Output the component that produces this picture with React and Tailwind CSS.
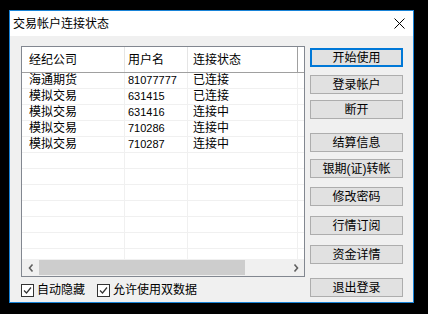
import React from 'react';

const CJK = { fontFamily: '"Liberation Sans", "Noto Sans CJK SC", sans-serif' };

const rows = [
  { company: '海通期货', user: '81077777', status: '已连接' },
  { company: '模拟交易', user: '631415', status: '已连接' },
  { company: '模拟交易', user: '631416', status: '连接中' },
  { company: '模拟交易', user: '710286', status: '连接中' },
  { company: '模拟交易', user: '710287', status: '连接中' },
];

const buttons = [
  { label: '开始使用', mt: 'mt-0', primary: true },
  { label: '登录帐户', mt: 'mt-[8px]' },
  { label: '断开', mt: 'mt-[6px]' },
  { label: '结算信息', mt: 'mt-[14px]' },
  { label: '银期(证)转帐', mt: 'mt-[7px]' },
  { label: '修改密码', mt: 'mt-[9px]' },
  { label: '行情订阅', mt: 'mt-[10px]' },
  { label: '资金详情', mt: 'mt-[10px]' },
  { label: '退出登录', mt: 'mt-[14px]' },
];

const Check = ({ label }) => (
  <label className="flex items-center gap-[3px]">
    <span className="w-[13px] h-[13px] border border-[#333333] bg-white flex items-center justify-center">
      <svg width="9" height="9" viewBox="0 0 9 9">
        <path d="M1 4.5 L3.5 7 L8 1.5" fill="none" stroke="#333" strokeWidth="1.2" />
      </svg>
    </span>
    <span className="text-[12px] leading-[14px] text-black">{label}</span>
  </label>
);

export default function App() {
  const empty = Array.from({ length: 8 });
  return (
    <div className="w-[428px] h-[314px] bg-black pt-[10px] pl-[9px]" style={CJK}>
      <div className="w-[405px] h-[293px] border border-[#1883d7] bg-[#f0f0f0] flex flex-col">
        {/* title bar */}
        <div className="h-[25px] bg-white flex items-center justify-between pl-[3px] pr-[8px]">
          <span className="text-[12px] leading-[14px] text-black">交易帐户连接状态</span>
          <svg width="11" height="11" viewBox="0 0 11 11">
            <path d="M0.5 0.5 L10.5 10.5 M10.5 0.5 L0.5 10.5" stroke="#000" strokeWidth="1" />
          </svg>
        </div>

        <div className="flex pl-[11px] pt-[10px]">
          <div className="flex flex-col">
            {/* list */}
            <div className="w-[284px] h-[231px] border border-[#828790] bg-white flex flex-col">
              <div className="h-[26px] flex border-b border-[#a0a0a0] text-[12px] text-black">
                <div className="w-[103px] pl-[7px] border-r border-[#e5e5e5] flex items-center">经纪公司</div>
                <div className="w-[63px] pl-[3px] border-r border-[#e5e5e5] flex items-center">用户名</div>
                <div className="w-[110px] pl-[5px] border-r border-[#a0a0a0] flex items-center">连接状态</div>
                <div className="flex-1"></div>
              </div>
              <div className="flex-1 overflow-hidden">
                {rows.map((r, i) => (
                  <div key={i} className="h-[16px] flex border-b border-[#f0f0f0] text-[12px] text-black">
                    <div className="w-[103px] pl-[7px] border-r border-[#f0f0f0] flex items-center leading-[15px]">{r.company}</div>
                    <div className="w-[63px] pl-[3px] border-r border-[#f0f0f0] flex items-center text-[11px] leading-[15px]">{r.user}</div>
                    <div className="w-[110px] pl-[5px] border-r border-[#f0f0f0] flex items-center leading-[15px]">{r.status}</div>
                    <div className="flex-1"></div>
                  </div>
                ))}
                {empty.map((_, i) => (
                  <div key={'e' + i} className="h-[16px] flex border-b border-[#f0f0f0]">
                    <div className="w-[103px] border-r border-[#f0f0f0]"></div>
                    <div className="w-[63px] border-r border-[#f0f0f0]"></div>
                    <div className="w-[110px] border-r border-[#f0f0f0]"></div>
                    <div className="flex-1"></div>
                  </div>
                ))}
              </div>
              {/* horizontal scrollbar */}
              <div className="h-[17px] bg-[#f0f0f0] flex items-center">
                <div className="w-[17px] h-[17px] flex items-center justify-center">
                  <svg width="6" height="8" viewBox="0 0 6 8">
                    <path d="M4.5 0.5 L1.5 4 L4.5 7.5" fill="none" stroke="#606060" strokeWidth="1.6" />
                  </svg>
                </div>
                <div className="w-[206px] h-[15px] bg-[#cdcdcd]"></div>
                <div className="flex-1"></div>
                <div className="w-[17px] h-[17px] flex items-center justify-center">
                  <svg width="6" height="8" viewBox="0 0 6 8">
                    <path d="M1.5 0.5 L4.5 4 L1.5 7.5" fill="none" stroke="#606060" strokeWidth="1.6" />
                  </svg>
                </div>
              </div>
            </div>
            {/* checkboxes */}
            <div className="flex items-center mt-[6px] gap-[12px]">
              <Check label="自动隐藏" />
              <Check label="允许使用双数据" />
            </div>
          </div>

          {/* buttons */}
          <div className="flex flex-col ml-[5px] pt-[2px]">
            {buttons.map((b) => (
              <button
                key={b.label}
                className={`${b.mt} w-[93px] h-[19px] bg-[#e1e1e1] text-[12px] leading-[14px] text-black flex items-center justify-center ${b.primary ? 'border-2 border-[#0078d7]' : 'border border-[#adadad]'}`}
              >
                {b.label}
              </button>
            ))}
          </div>
        </div>
      </div>
    </div>
  );
}
